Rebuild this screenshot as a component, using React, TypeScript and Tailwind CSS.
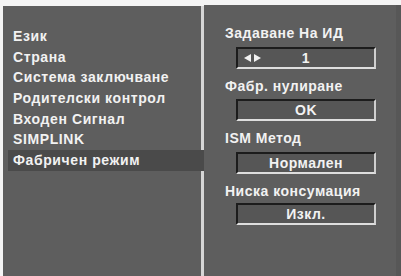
const menu = ["Език", "Страна", "Система заключване", "Родителски контрол", "Входен Сигнал", "SIMPLINK", "Фабричен режим"];

function Arrows() {
  return (
    <svg width="17" height="8" viewBox="0 0 17 8" className="absolute left-[6px] top-1/2 -translate-y-1/2">
      <polygon points="0,4 7,0 7,8" fill="#f2f2f2" />
      <polygon points="17,4 10,0 10,8" fill="#f2f2f2" />
    </svg>
  );
}

function Box({ children, arrows }: { children: React.ReactNode; arrows?: boolean }) {
  return (
    <div className="relative ml-[11px] flex h-[22px] w-[140px] items-center justify-center border-t-2 border-l-2 border-b-2 border-r-2 border-t-[#1c1c1c] border-l-[#1c1c1c] border-b-[#dedede] border-r-[#cfcfcf] bg-[#565656]">
      {arrows && <Arrows />}
      <span className="text-[14px] font-bold leading-none tracking-[0.5px] text-[#f2f2f2]">{children}</span>
    </div>
  );
}

function Label({ children }: { children: React.ReactNode }) {
  return <div className="text-[14px] font-bold leading-[16px] tracking-[0.5px] text-[#f2f2f2]">{children}</div>;
}

export default function App() {
  return (
    <div
      className="flex h-[276px] w-[401px] overflow-hidden bg-[#f4f4f4] pt-[5px] pl-[3px]"
      style={{ fontFamily: '"Liberation Sans", Arial, sans-serif' }}
    >
      <div className="mt-[1px] flex w-[201px] flex-col border-r-[3px] border-[#d6d6d6] bg-[#5e5e5e] pt-[20px]">
        {menu.map((m, i) => (
          <div
            key={m}
            className={
              i === menu.length - 1
                ? "relative -mr-[3px] ml-[5px] h-[20.7px] bg-[#4a4a4a] pl-[5px] text-[14px] font-bold leading-[20.7px] tracking-[0.6px] text-[#f2f2f2]"
                : "h-[20.7px] pl-[10px] text-[14px] font-bold leading-[20.7px] tracking-[0.6px] text-[#f2f2f2]"
            }
          >
            {m}
          </div>
        ))}
      </div>
      <div className="flex flex-1 flex-col border-r-[5px] border-[#575757] bg-[#5e5e5e] pl-[21px] pt-[20px]">
        <Label>Задаване На ИД</Label>
        <div className="mt-[6px]">
          <Box arrows>1</Box>
        </div>
        <div className="mt-[9px]">
          <Label>Фабр. нулиране</Label>
        </div>
        <div className="mt-[5px]">
          <Box>OK</Box>
        </div>
        <div className="mt-[9px]">
          <Label>ISM Метод</Label>
        </div>
        <div className="mt-[6px]">
          <Box>Нормален</Box>
        </div>
        <div className="mt-[9px]">
          <Label>Ниска консумация</Label>
        </div>
        <div className="mt-[4px]">
          <Box>Изкл.</Box>
        </div>
      </div>
    </div>
  );
}
